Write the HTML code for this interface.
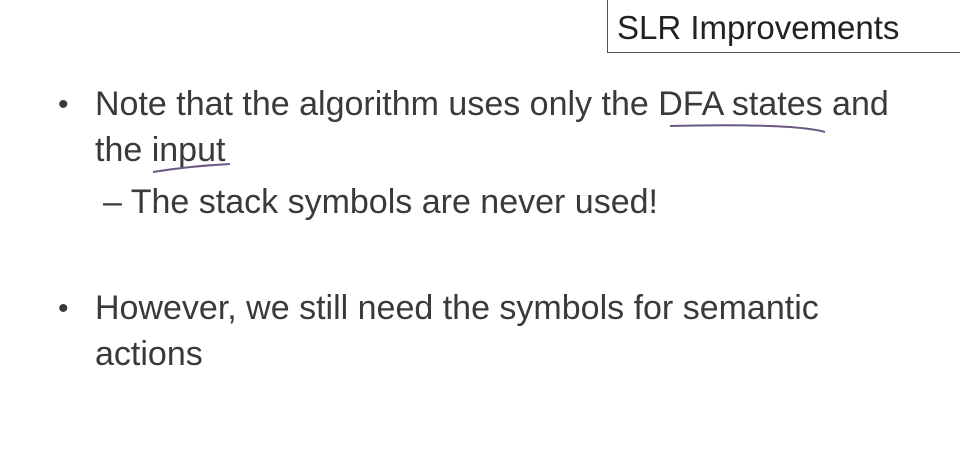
<!DOCTYPE html>
<html><head><style>
body{margin:0;width:960px;height:459px;background:#fff;overflow:hidden;position:relative;font-family:"Liberation Sans",sans-serif;color:#3a3a3a}
.t{position:absolute;white-space:nowrap;font-size:34px;line-height:1}
.box{position:absolute;left:607px;top:-2px;width:360px;height:55px;border:1px solid #555;box-sizing:border-box}
</style></head><body>
<div class="box"></div>
<div class="t" style="left:617px;top:11px;font-size:33px;color:#222">SLR Improvements</div>
<div class="t" style="left:58px;top:90px;font-size:30px">•</div>
<div class="t" style="left:95px;top:87px">Note that the algorithm uses only the DFA states and</div>
<div class="t" style="left:95px;top:133px">the input</div>
<div class="t" style="left:103px;top:185px">– The stack symbols are never used!</div>
<div class="t" style="left:58px;top:294px;font-size:30px">•</div>
<div class="t" style="left:95px;top:291px">However, we still need the symbols for semantic</div>
<div class="t" style="left:95px;top:337px">actions</div>
<svg width="960" height="459" style="position:absolute;left:0;top:0">
<path d="M670 126 Q740 124 790 127 Q815 129 825 132" stroke="#6a5a80" stroke-width="2" fill="none"/>
<path d="M153 172 Q190 166 230 164" stroke="#6a5a80" stroke-width="2" fill="none"/>
</svg>
</body></html>
